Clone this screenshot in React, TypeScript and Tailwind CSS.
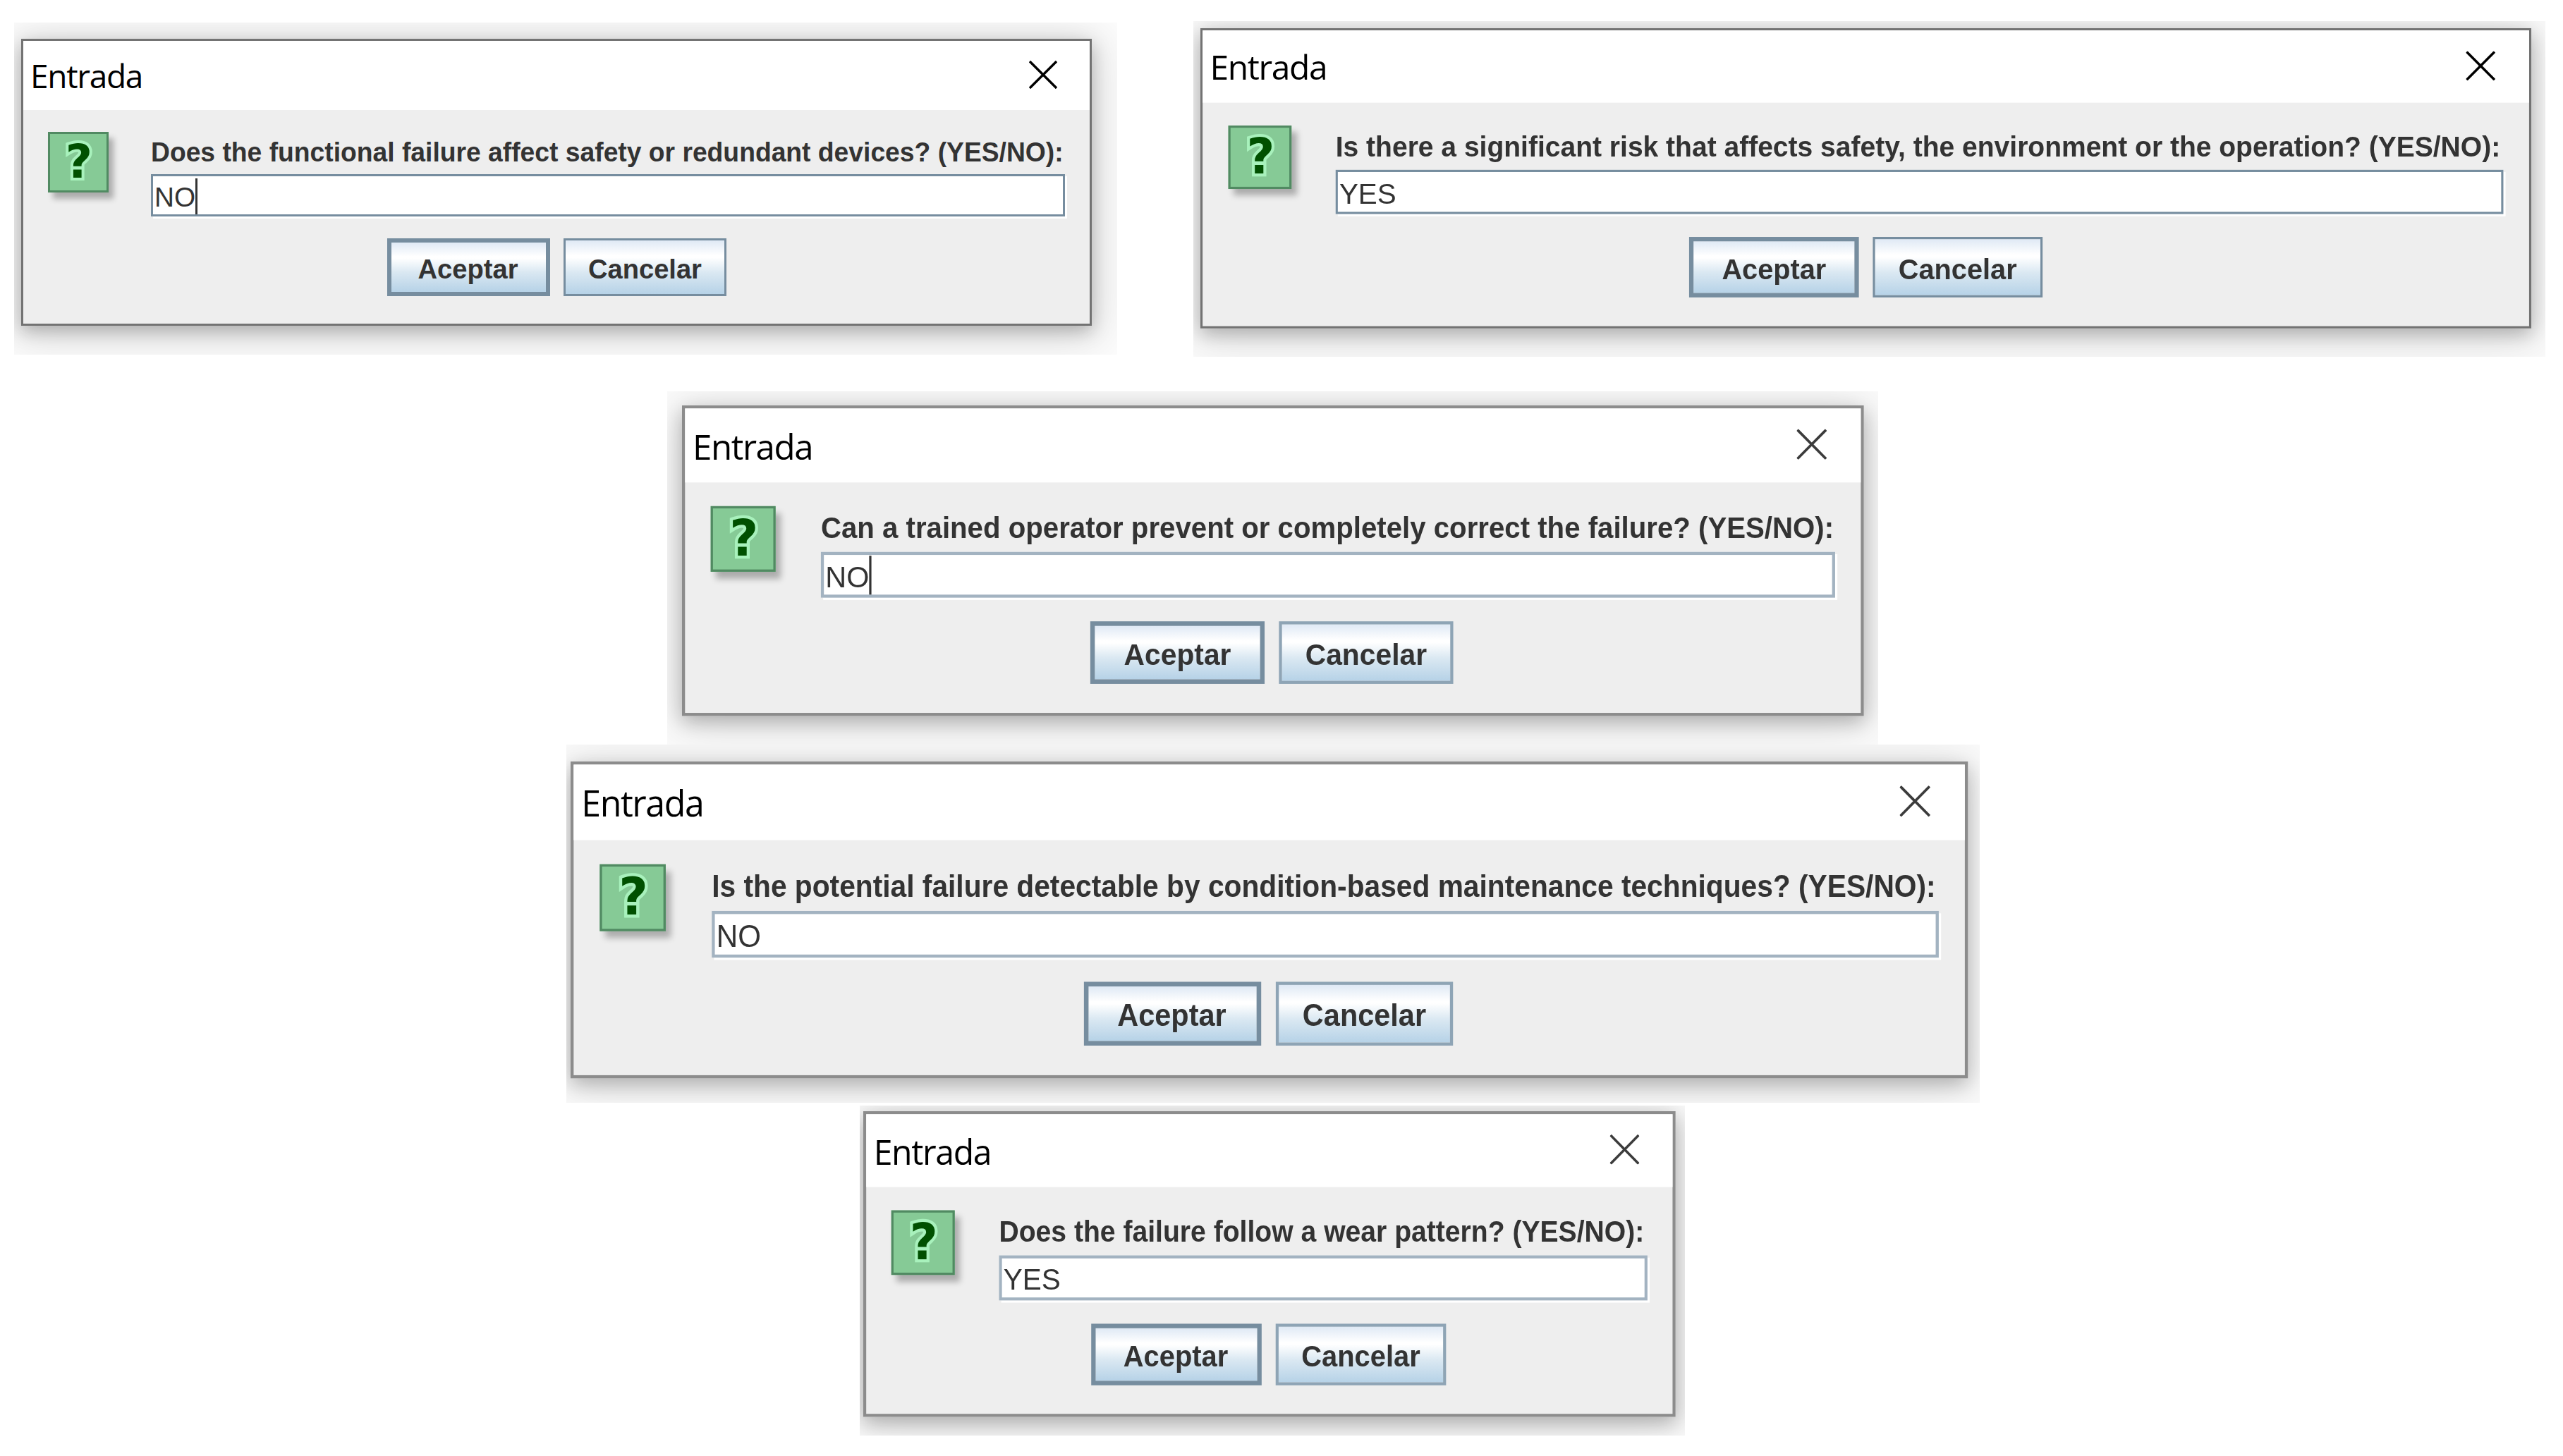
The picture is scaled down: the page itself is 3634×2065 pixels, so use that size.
import React from "react";

type DialogProps = {
  question: string;
  answer: string;
  caret?: boolean;
  soft?: boolean;
  panel: string;
  frame: string;
  stretch: string;
};

const dialogs: DialogProps[] = [
  {
    question: "Does the functional failure affect safety or redundant devices? (YES/NO):",
    answer: "NO",
    caret: true,
    panel: "mt-[2px] w-[1564px] h-[471px] pl-[10px] pt-[23px]",
    frame: "w-[1518px]",
    stretch: "scale-x-[0.943]",
  },
  {
    question: "Is there a significant risk that affects safety, the environment or the operation? (YES/NO):",
    answer: "YES",
    panel: "w-[1917px] h-[476px] pl-[10px] pt-[10px]",
    frame: "w-[1811px] scale-x-[1.042] scale-y-[1.046]",
    stretch: "scale-x-[0.948]",
  },
  {
    question: "Can a trained operator prevent or completely correct the failure? (YES/NO):",
    answer: "NO",
    caret: true,
    soft: true,
    panel: "ml-[946px] mt-[49px] w-[1717px] h-[501px] pl-[21px] pt-[20px]",
    frame: "w-[1566px] scale-x-[1.07] scale-y-[1.082]",
    stretch: "scale-x-[0.951]",
  },
  {
    question: "Is the potential failure detectable by condition-based maintenance techniques? (YES/NO):",
    answer: "NO",
    soft: true,
    panel: "ml-[803px] w-[2004px] h-[508px] pl-[6px] pt-[24px]",
    frame: "w-[1821px] scale-x-[1.088] scale-y-[1.104]",
    stretch: "scale-x-[0.9475]",
  },
  {
    question: "Does the failure follow a wear pattern? (YES/NO):",
    answer: "YES",
    soft: true,
    panel: "ml-[1219px] mt-[4px] w-[1170px] h-[468px] pl-[5px] pt-[8px]",
    frame: "w-[1101px] scale-x-[1.046] scale-y-[1.065]",
    stretch: "scale-x-[0.9465]",
  },
];

function QuestionIcon() {
  return (
    <div className="mt-[31px] flex h-[86px] w-[86px] shrink-0 items-center justify-center border-[3px] border-[#518a62] bg-[#86ca96] shadow-[7px_9px_8px_rgba(0,0,0,0.28)]">
      <span className="pl-[2px] font-['DejaVu_Sans',sans-serif] text-[66px] leading-none font-bold text-[#005000] [-webkit-text-stroke:8px_#a8f1bc] [paint-order:stroke_fill]">
        ?
      </span>
    </div>
  );
}

function DialogButton({ label, primary, soft }: { label: string; primary?: boolean; soft?: boolean }) {
  const border = primary
    ? "border-[6px] border-[#768d9f]"
    : soft
      ? "border-[4px] border-[#8ea4b5]"
      : "border-[3px] border-[#768d9f]";

  return (
    <button
      className={`flex h-[82px] w-[231px] items-center justify-center bg-[linear-gradient(to_bottom,#dfe9f5_0%,#ffffff_28%,#ffffff_32%,#dae8f2_60%,#b6d2e7_100%)] pt-[5px] text-[39.5px] leading-none font-bold text-[#333333] ${border}`}
    >
      <span className="scale-x-[0.965]">{label}</span>
    </button>
  );
}

function InputDialog({ question, answer, caret, soft, panel, frame, stretch }: DialogProps) {
  return (
    <div className={`shrink-0 overflow-hidden ${panel}`}>
      <div
        className={`flex h-[407px] origin-top-left flex-col bg-[#eeeeee] shadow-[0_8px_24px_rgba(0,0,0,0.26),0_8px_70px_20px_rgba(0,0,0,0.12)] ${soft ? "border-[4px] border-[#8c8c8c]" : "border-[3px] border-[#737373]"} ${frame}`}
      >
        <div
          className={`flex shrink-0 items-center justify-between bg-white pl-[10px] ${soft ? "h-[97px] pr-[45px]" : "h-[98px] pr-[46px]"}`}
        >
          <span className="font-['Open_Sans',sans-serif] text-[46px] leading-none tracking-[-1.3px] text-black">
            Entrada
          </span>
          <svg className="mb-[3px] h-[40px] w-[40px]" viewBox="0 0 40 40" fill="none">
            <path d="M1 1L39 39M39 1L1 39" stroke={soft ? "#3c3c3c" : "#000000"} strokeWidth="3.4" />
          </svg>
        </div>
        <div className={soft ? "flex px-[34px]" : "flex px-[35px]"}>
          <QuestionIcon />
          <div className="ml-[60px] flex min-w-0 flex-1 flex-col pt-[31px]">
            <span
              className={`h-[60px] origin-left text-[39.5px] leading-[56px] font-bold whitespace-nowrap text-[#333333] ${stretch}`}
            >
              {question}
            </span>
            <div
              className={`flex h-[60px] items-center bg-white pl-[2px] shadow-[3px_3px_0_#ffffff] ${soft ? "border-[4px] border-[#a3b3c1]" : "border-[3px] border-[#768d9f]"}`}
            >
              <span className="origin-left scale-x-[0.98] pt-[6px] text-[39.5px] leading-none text-[#333333]">
                {answer}
              </span>
              {caret && <span className="-ml-[1px] h-[51px] w-[3px] self-end bg-[#333333]" />}
            </div>
          </div>
        </div>
        <div className={`mt-[31px] flex justify-center gap-[19px] ${soft ? "pr-[3px]" : ""}`}>
          <DialogButton label="Aceptar" primary soft={soft} />
          <DialogButton label="Cancelar" soft={soft} />
        </div>
      </div>
    </div>
  );
}

export default function App() {
  return (
    <div className="flex h-[2065px] w-[3634px] flex-col overflow-hidden bg-white pt-[30px] font-['Liberation_Sans',Arial,sans-serif]">
      <div className="flex items-start gap-[108px] pl-[20px]">
        <InputDialog {...dialogs[0]} />
        <InputDialog {...dialogs[1]} />
      </div>
      <InputDialog {...dialogs[2]} />
      <InputDialog {...dialogs[3]} />
      <InputDialog {...dialogs[4]} />
    </div>
  );
}
